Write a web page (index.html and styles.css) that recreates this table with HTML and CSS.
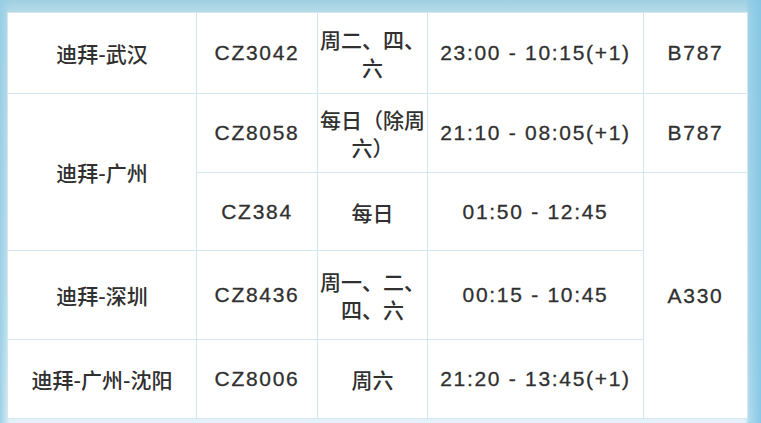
FILE: index.html
```html
<!DOCTYPE html>
<html lang="zh-CN">
<head>
<meta charset="utf-8">
<title>航班时刻表</title>
<link rel="stylesheet" href="styles.css">
</head>
<body>
<div class="page">
  <table class="schedule">
    <colgroup>
      <col class="c-route">
      <col class="c-code">
      <col class="c-days">
      <col class="c-time">
      <col class="c-plane">
    </colgroup>
    <tbody>
      <tr class="r1">
        <td class="zh">迪拜-武汉</td>
        <td class="en">CZ3042</td>
        <td class="zh days">周二、四、<br>六</td>
        <td class="en">23:00 - 10:15(+1)</td>
        <td class="en">B787</td>
      </tr>
      <tr class="r2">
        <td class="zh" rowspan="2">迪拜-广州</td>
        <td class="en">CZ8058</td>
        <td class="zh days">每日（除周<br>六）</td>
        <td class="en">21:10 - 08:05(+1)</td>
        <td class="en">B787</td>
      </tr>
      <tr class="r3">
        <td class="en">CZ384</td>
        <td class="zh days">每日</td>
        <td class="en">01:50 - 12:45</td>
        <td class="en" rowspan="3">A330</td>
      </tr>
      <tr class="r4">
        <td class="zh">迪拜-深圳</td>
        <td class="en">CZ8436</td>
        <td class="zh days">周一、二、<br>四、六</td>
        <td class="en">00:15 - 10:45</td>
      </tr>
      <tr class="r5">
        <td class="zh">迪拜-广州-沈阳</td>
        <td class="en">CZ8006</td>
        <td class="zh days">周六</td>
        <td class="en">21:20 - 13:45(+1)</td>
      </tr>
    </tbody>
  </table>
</div>
</body>
</html>
```

FILE: styles.css
```css
html, body {
  margin: 0;
  padding: 0;
}

body {
  width: 761px;
  height: 423px;
  overflow: hidden;
  background:
    linear-gradient(to right, rgba(150, 205, 228, 0.9) 0px, rgba(170, 215, 232, 0) 10px),
    linear-gradient(to left, rgba(130, 198, 228, 0.95) 0px, rgba(140, 202, 230, 0.6) 12px, rgba(140, 202, 230, 0) 16px),
    linear-gradient(to bottom, #9fd0e2 0px, #b4dbe9 12px, #c2e2ee 200px, #cde8f2 330px, #e3f2f8 423px);
}

.page {
  padding: 12px 14px 5px 7px;
}

.schedule {
  width: 740px;
  height: 406px;
  table-layout: fixed;
  border-collapse: collapse;
  background: #ffffff;
  color: #303030;
  font-family: "Liberation Sans", "Noto Sans CJK SC", sans-serif;
  font-size: 21px;
}

.c-route { width: 189px; }
.c-code { width: 121px; }
.c-days { width: 110px; }
.c-time { width: 216px; }
.c-plane { width: 104px; }

.r1 { height: 81px; }
.r2 { height: 79px; }
.r3 { height: 78px; }
.r4 { height: 89px; }
.r5 { height: 79px; }

.schedule td {
  border: 1px solid #d3e7f3;
  padding: 0;
  text-align: center;
  vertical-align: middle;
  line-height: 28px;
}

.zh {
  font-family: "Noto Sans CJK SC", sans-serif;
  font-weight: 500;
  letter-spacing: 0;
}

.days {
  white-space: nowrap;
}

.en {
  letter-spacing: 1.7px;
  white-space: nowrap;
  -webkit-text-stroke: 0.3px #303030;
}
```
